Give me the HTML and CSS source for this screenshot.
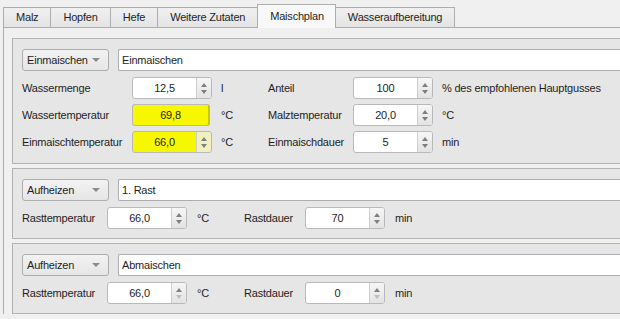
FILE: index.html
```html
<!DOCTYPE html>
<html lang="de">
<head>
  <meta charset="UTF-8" />
  <title>Maischplan</title>
  <link rel="stylesheet" href="styles.css">
</head>
<body>
  <div class="tabbar">
    <div class="tab">Malz</div>
    <div class="tab">Hopfen</div>
    <div class="tab">Hefe</div>
    <div class="tab">Weitere Zutaten</div>
    <div class="tab active">Maischplan</div>
    <div class="tab">Wasseraufbereitung</div>
    <div class="tab-rest"></div>
  </div>

  <div class="pane">
    <!-- Einmaischen -->
    <div class="frame">
      <div class="head">
        <div class="combo">Einmaischen<span class="caret"></span></div>
        <div class="line-edit">Einmaischen</div>
      </div>
      <div class="grid main">
        <span class="lbl">Wassermenge</span>
        <div class="spin"><span class="val">12,5</span><span class="btns"><i class="up"></i><i class="down"></i></span></div>
        <span class="unit">l</span>
        <span class="lbl">Anteil</span>
        <div class="spin"><span class="val">100</span><span class="btns"><i class="up"></i><i class="down"></i></span></div>
        <span class="unit">% des empfohlenen Hauptgusses</span>

        <span class="lbl">Wassertemperatur</span>
        <div class="spin yellow ro"><span class="val">69,8</span></div>
        <span class="unit">°C</span>
        <span class="lbl">Malztemperatur</span>
        <div class="spin"><span class="val">20,0</span><span class="btns"><i class="up"></i><i class="down"></i></span></div>
        <span class="unit">°C</span>

        <span class="lbl">Einmaischtemperatur</span>
        <div class="spin yellow"><span class="val">66,0</span><span class="btns"><i class="up"></i><i class="down"></i></span></div>
        <span class="unit">°C</span>
        <span class="lbl">Einmaischdauer</span>
        <div class="spin"><span class="val">5</span><span class="btns"><i class="up"></i><i class="down"></i></span></div>
        <span class="unit">min</span>
      </div>
    </div>

    <!-- 1. Rast -->
    <div class="frame">
      <div class="head">
        <div class="combo">Aufheizen<span class="caret"></span></div>
        <div class="line-edit">1. Rast</div>
      </div>
      <div class="grid rast">
        <span class="lbl">Rasttemperatur</span>
        <div class="spin"><span class="val">66,0</span><span class="btns"><i class="up"></i><i class="down"></i></span></div>
        <span class="unit">°C</span>
        <span class="lbl">Rastdauer</span>
        <div class="spin"><span class="val">70</span><span class="btns"><i class="up"></i><i class="down"></i></span></div>
        <span class="unit">min</span>
      </div>
    </div>

    <!-- Abmaischen -->
    <div class="frame">
      <div class="head">
        <div class="combo">Aufheizen<span class="caret"></span></div>
        <div class="line-edit">Abmaischen</div>
      </div>
      <div class="grid rast">
        <span class="lbl">Rasttemperatur</span>
        <div class="spin"><span class="val">66,0</span><span class="btns"><i class="up"></i><i class="down dim"></i></span></div>
        <span class="unit">°C</span>
        <span class="lbl">Rastdauer</span>
        <div class="spin"><span class="val">0</span><span class="btns"><i class="up"></i><i class="down dim"></i></span></div>
        <span class="unit">min</span>
      </div>
    </div>
  </div>
</body>
</html>
```

FILE: styles.css
```css
* {
  box-sizing: border-box;
}

body {
  margin: 0;
  width: 620px;
  height: 319px;
  overflow: hidden;
  background: #f0f0f0;
  color: #1e1e1e;
  font-family: "Liberation Sans", Arial, sans-serif;
  font-size: 11px;
  letter-spacing: -0.2px;
}

/* tab bar */
.tabbar {
  display: flex;
  align-items: flex-end;
  padding-left: 3px;
  height: 28px;
}

.tab {
  height: 21px;
  padding: 0 12px;
  line-height: 19px;
  border: 1px solid #adadad;
  margin-right: -1px;
  background: linear-gradient(#f0f0f0, #e4e4e4);
  white-space: nowrap;
}

.tab.active {
  height: 24px;
  line-height: 22px;
  border-bottom: none;
  background: #f8f8f8;
  padding: 0 11px 0 12px;
}

.tab-rest {
  flex: 1;
  margin-left: 1px;
  border-bottom: 1px solid #adadad;
}

/* pane */
.pane {
  width: 700px;
  margin-left: 3px;
  border-left: 1px solid #adadad;
  padding: 10px 0 0 8px;
}

.frame {
  border: 1px solid #b3b3b3;
  background: #e6e6e6;
  padding: 10px 0 9px 9px;
  margin-bottom: 4px;
}

.frame:first-child {
  padding-bottom: 10px;
}

.head {
  display: flex;
  gap: 9px;
  height: 22px;
  margin-bottom: 6px;
}

.combo {
  position: relative;
  width: 87px;
  border: 1px solid #adadad;
  border-radius: 3px;
  background: linear-gradient(#f2f2f2, #e6e6e6);
  padding-left: 4px;
  line-height: 20px;
}

.caret {
  position: absolute;
  right: 8px;
  top: 8px;
  border-left: 4px solid transparent;
  border-right: 4px solid transparent;
  border-top: 4px solid #8a8a8a;
}

.line-edit {
  flex: 1;
  background: #fff;
  border: 1px solid #abadb3;
  border-right: none;
  border-radius: 2px 0 0 2px;
  padding-left: 3px;
  line-height: 20px;
}

/* form grids */
.grid {
  display: grid;
  align-items: center;
  row-gap: 5px;
  grid-auto-rows: 22px;
}

.grid.main {
  grid-template-columns: 110px 80px 56px 85px 80px auto;
}

.grid.rast {
  grid-template-columns: 85px 80px 57px 61px 80px auto;
}

.unit {
  padding-left: 9px;
  white-space: nowrap;
}

.rast .unit {
  padding-left: 10px;
}

.spin {
  display: flex;
  height: 22px;
  background: #fff;
  border: 1px solid #b9b9b9;
  border-radius: 3px;
}

.spin .val {
  flex: 1;
  text-align: center;
  line-height: 20px;
}

.spin.yellow {
  background: #f7f700;
}

.spin.ro {
  width: 78px;
  border-right: 2px solid #c9c900;
}

.btns {
  width: 15px;
  display: flex;
  flex-direction: column;
  justify-content: center;
  align-items: center;
  gap: 3px;
  border-left: 1px solid #cfcfcf;
  border-radius: 0 2px 2px 0;
  background: linear-gradient(#f6f6f6, #e3e3e3);
}

.yellow .btns {
  background: #f0f0c0;
}

.btns i {
  display: block;
  border-left: 3px solid transparent;
  border-right: 3px solid transparent;
}

.btns .up {
  border-bottom: 4px solid #7f7f7f;
}

.btns .down {
  border-top: 4px solid #7f7f7f;
}

.btns .down.dim {
  border-top-color: #bdbdbd;
}
```
